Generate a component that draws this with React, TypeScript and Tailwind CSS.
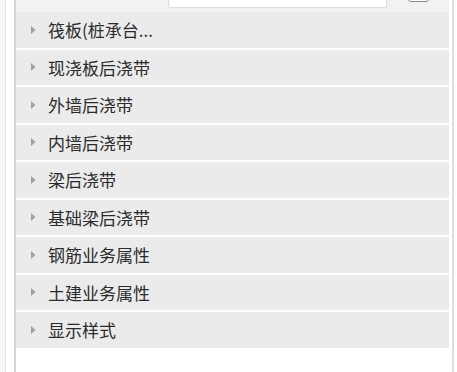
const groups = [
  '筏板(桩承台...',
  '现浇板后浇带',
  '外墙后浇带',
  '内墙后浇带',
  '梁后浇带',
  '基础梁后浇带',
  '钢筋业务属性',
  '土建业务属性',
  '显示样式',
];

function Caret() {
  return (
    <svg width="5" height="8" viewBox="0 0 5 8" className="shrink-0">
      <path d="M0 0 L4.5 4 L0 8 Z" fill="#a0a0a0" />
    </svg>
  );
}

function GroupRow({label}: {label: string}) {
  return (
    <div className="flex h-[35.5px] items-center gap-[12px] bg-[#ebebeb] pl-[15px]">
      <Caret />
      <span className="text-[17px] leading-none text-[#2b2b2b]">{label}</span>
    </div>
  );
}

export default function App() {
  return (
    <div
      className="flex h-[372px] w-[457px] overflow-hidden bg-white"
      style={{fontFamily: '"Noto Sans CJK SC", "Noto Sans", sans-serif'}}
    >
      {/* left gutter */}
      <div className="flex w-[16px] shrink-0">
        <div className="w-[5px] bg-[#f7f7f7]" />
        <div className="w-[1px] bg-[#e4e4e4]" />
        <div className="w-[8px] bg-white" />
        <div className="w-[2px] bg-[#d6d6d6]" />
      </div>

      <div className="flex w-[433px] shrink-0 flex-col">
        {/* header, scrolled mostly out of view */}
        <div className="flex h-[12px] items-end overflow-hidden bg-[#f2f2f2]">
          <div className="flex h-[30px] w-full shrink-0 items-center">
            <span className="w-[152px] -translate-y-[5px] pl-[22px] text-[15px] text-[#333]">名称</span>
            <div className="h-[24px] w-[219px] -translate-y-[1px] rounded-[2px] border border-[#dcdcdc] bg-white" />
            <div className="ml-[21px] h-[22px] w-[21px] -translate-y-[6px] rounded-[3px] border border-[#8a8a8a] bg-white" />
          </div>
        </div>

        <div className="flex flex-col gap-[2px]">
          {groups.map((g) => (
            <GroupRow key={g} label={g} />
          ))}
        </div>
      </div>

      {/* right edge */}
      <div className="flex w-[8px] shrink-0">
        <div className="w-[3px] bg-white" />
        <div className="w-[2px] bg-[#dedede]" />
        <div className="w-[3px] bg-white" />
      </div>
    </div>
  );
}
